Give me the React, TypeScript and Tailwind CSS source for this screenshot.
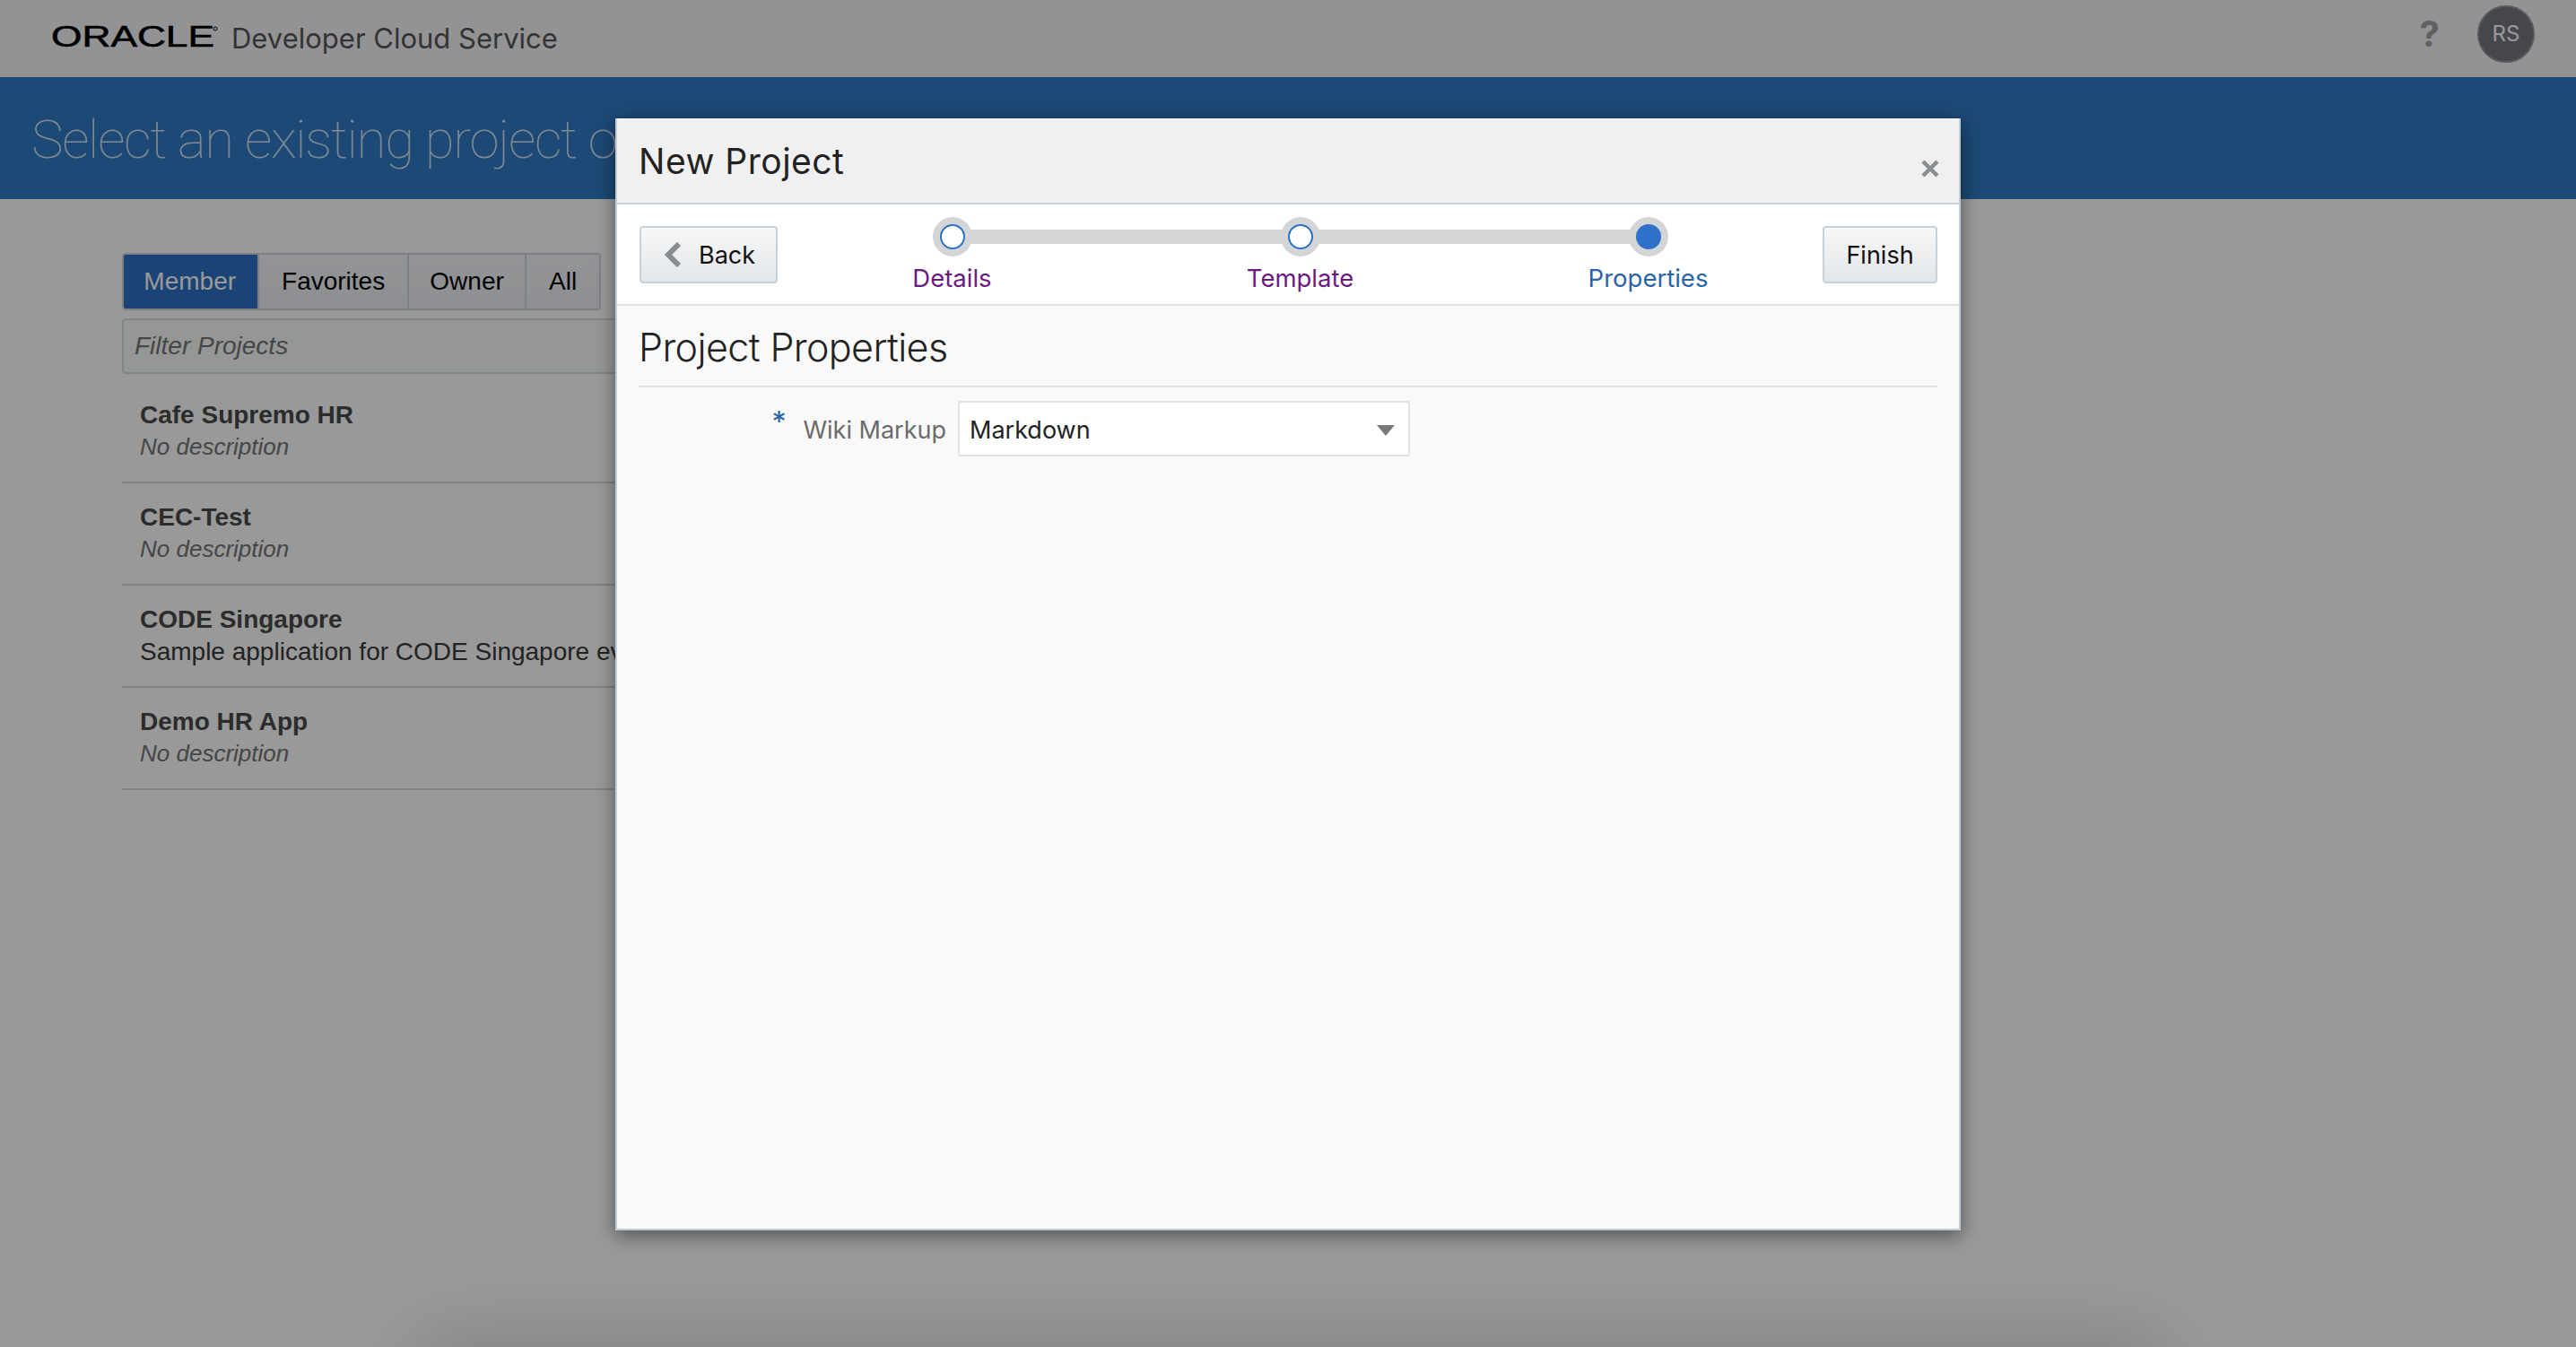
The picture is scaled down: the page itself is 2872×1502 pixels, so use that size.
import React from "react";

const projects = [
  { name: "Cafe Supremo HR", description: "" },
  { name: "CEC-Test", description: "" },
  { name: "CODE Singapore", description: "Sample application for CODE Singapore event" },
  { name: "Demo HR App", description: "" },
];

const tabs = [
  { label: "Member", width: "w-[152px]", active: true },
  { label: "Favorites", width: "w-[167px]", active: false },
  { label: "Owner", width: "w-[132px]", active: false },
  { label: "All", width: "w-[83px]", active: false },
];

const steps = [
  { label: "Details", current: false },
  { label: "Template", current: false },
  { label: "Properties", current: true },
];

const OracleLogo = () => (
  <svg width="186" height="28" viewBox="0 0 186 28" className="block overflow-visible">
    <text
      x="0"
      y="23"
      textLength="182"
      lengthAdjust="spacingAndGlyphs"
      fontFamily="Liberation Sans, sans-serif"
      fontSize="33"
      fontWeight="400"
      fill="#000"
      stroke="#000"
      strokeWidth="0.6"
    >
      ORACLE
    </text>
    <circle cx="183" cy="3" r="2" fill="none" stroke="#000" strokeWidth="1" />
  </svg>
);

const WizardButton = ({ children }: { children: React.ReactNode }) => (
  <button className="flex h-[64px] items-center justify-center rounded-[4px] border-2 border-[#c9d1d8] bg-gradient-to-b from-[#f6f7f8] to-[#e3e6e9] pt-[3px] text-[27px] text-[#111]">
    {children}
  </button>
);

const ProjectList = () => (
  <div className="mt-[8px] w-[1100px]">
    {projects.map(project => (
      <div key={project.name} className="h-[114px] border-b-2 border-[#d8d8d8] px-5 pt-[20px]">
        <div className="text-[28px] leading-[36px] font-bold text-[#4a4a4a]">{project.name}</div>
        {project.description ? (
          <div className="text-[28px] leading-[35px] whitespace-nowrap text-[#3a3a3a]">
            {project.description}
          </div>
        ) : (
          <div className="text-[26px] leading-[35px] text-[#757575] italic">No description</div>
        )}
      </div>
    ))}
  </div>
);

const Stepper = () => (
  <div className="relative flex gap-[188px] self-start pt-[14px]">
    <div className="absolute top-[28px] right-[100px] left-[100px] h-4 bg-[#d4d5d7]" />
    {steps.map(step => (
      <div key={step.label} className="relative flex w-[200px] flex-col items-center">
        <div className="flex size-[44px] shrink-0 items-center justify-center rounded-full bg-[#d4d5d7]">
          <div
            className={
              step.current
                ? "size-[28px] rounded-full bg-[#2d71c8]"
                : "size-[28px] rounded-full border-2 border-[#2d71c8] bg-white"
            }
          />
        </div>
        <div
          className={
            step.current
              ? "mt-[6px] text-[27.5px] leading-[36px] text-[#2a63a8]"
              : "mt-[6px] text-[27.5px] leading-[36px] text-[#6b1a82]"
          }
        >
          {step.label}
        </div>
      </div>
    ))}
  </div>
);

const NewProjectDialog = () => (
  <div className="absolute top-[132px] left-[686px] flex h-[1240px] w-[1500px] flex-col border-x-2 border-b-2 border-[#c4cdd6] bg-[#f9f9f9] font-['Inter',sans-serif] shadow-[0_6px_20px_rgba(0,0,0,0.45)]">
    <div className="relative flex h-[96px] shrink-0 items-center border-b-2 border-[#c8d0d8] bg-[#f0f0f0] pt-[2px] pr-[24px] pl-[25px]">
      <h1 className="-ml-[1px] text-[39px] font-normal tracking-[0.5px] text-[#222]">New Project</h1>
      <svg width="20" height="20" viewBox="0 0 20 20" className="absolute top-[46px] right-[22px]">
        <path d="M2 2 L18 18 M18 2 L2 18" stroke="#8a8d90" strokeWidth="4.5" fill="none" />
      </svg>
    </div>
    <div className="flex h-[113px] shrink-0 items-start justify-between border-b-2 border-[#dfe4e8] bg-white pt-[24px] pr-[24px] pl-[25px]">
      <WizardButton>
        <span className="flex w-[150px] items-center pl-[25px]">
          <svg width="20" height="28" viewBox="0 0 20 28" className="mr-[19px] -mt-[3px] shrink-0">
            <path d="M17 2 L5 14 L17 26" stroke="#8a8d90" strokeWidth="6" fill="none" />
          </svg>
          Back
        </span>
      </WizardButton>
      <div className="-mt-[24px]">
        <Stepper />
      </div>
      <WizardButton>
        <span className="w-[124px] text-center">Finish</span>
      </WizardButton>
    </div>
    <div className="flex-1 pr-[24px] pl-[25px]">
      <h2 className="-ml-[1px] border-b-2 border-[#dfe3e7] pt-[20px] pb-[17px] text-[43px] leading-[52px] font-light tracking-[-0.6px] text-[#222]">
        Project Properties
      </h2>
      <div className="mt-[15px] flex h-[62px] items-center">
        <div className="flex w-[355px] items-center justify-end pt-[5px] pr-[13px]">
          <span className="-mt-[20px] mr-[19px] text-[32px] leading-none text-[#2a63a8]">*</span>
          <span className="text-[27px] text-[#6b6b6b]">Wiki Markup</span>
        </div>
        <div className="flex h-[62px] w-[504px] items-center justify-between rounded-[3px] border-2 border-[#dfe3e7] bg-white pt-[4px] pr-[15px] pl-[11px] text-[27px] text-[#222]">
          Markdown
          <span className="h-0 w-0 border-x-[10px] border-t-[12px] border-x-transparent border-t-[#7a7a7a]" />
        </div>
      </div>
    </div>
  </div>
);

const App = () => {
  return (
    <div className="relative h-[1502px] w-full overflow-hidden bg-white font-['Liberation_Sans',sans-serif]">
      <header className="flex h-[86px] items-center justify-between bg-[#f5f6f8] pr-[46px] pl-[57px]">
        <div className="flex items-center gap-[15px]">
          <OracleLogo />
          <span className="font-['Inter',sans-serif] text-[31px] text-[#555]">Developer Cloud Service</span>
        </div>
        <div className="flex items-center gap-[42px] pb-[10px]">
          <span className="font-['Inter',sans-serif] text-[40px] leading-none font-bold text-[#a0a0a0]">?</span>
          <div className="flex size-[64px] items-center justify-center rounded-full border-2 border-[#939496] bg-[#76777f] font-['Inter',sans-serif] text-[24px] text-white">
            RS
          </div>
        </div>
      </header>

      <div className="flex h-[136px] items-center overflow-hidden bg-[#2f7bc3] pt-[3px] pl-[35px]">
        <span className="font-['Roboto',sans-serif] text-[60px] font-thin tracking-[-1.3px] whitespace-nowrap text-white/80">
          Select an existing project or create a new one
        </span>
      </div>

      <main className="pt-[60px] pl-[136px]">
        <div className="flex h-[64px] w-[534px] overflow-hidden rounded-[4px] border-2 border-[#d0d8e0] text-[28px]">
          {tabs.map(tab => (
            <div
              key={tab.label}
              className={
                tab.active
                  ? `-m-[2px] mr-0 flex ${tab.width} items-center justify-center bg-[#2f71c3] text-white`
                  : `flex ${tab.width} items-center justify-center border-l-2 border-[#d0d8e0] bg-gradient-to-b from-[#f5f7fa] to-[#eceff3] text-[#000]`
              }
            >
              {tab.label}
            </div>
          ))}
        </div>
        <div className="mt-[9px] flex h-[62px] w-[1100px] items-center rounded-[4px] border-2 border-[#d8dfe6] bg-[#f8fafa] pl-[12px] text-[28px] text-[#757575] italic">
          Filter Projects
        </div>
        <ProjectList />
      </main>

      <div className="absolute top-[1502px] left-[470px] h-20 w-[1940px] shadow-[0_0_90px_rgba(0,0,0,0.2)]" />

      <div className="absolute inset-0 bg-black/40" />
      <NewProjectDialog />
    </div>
  );
};

export default App;
